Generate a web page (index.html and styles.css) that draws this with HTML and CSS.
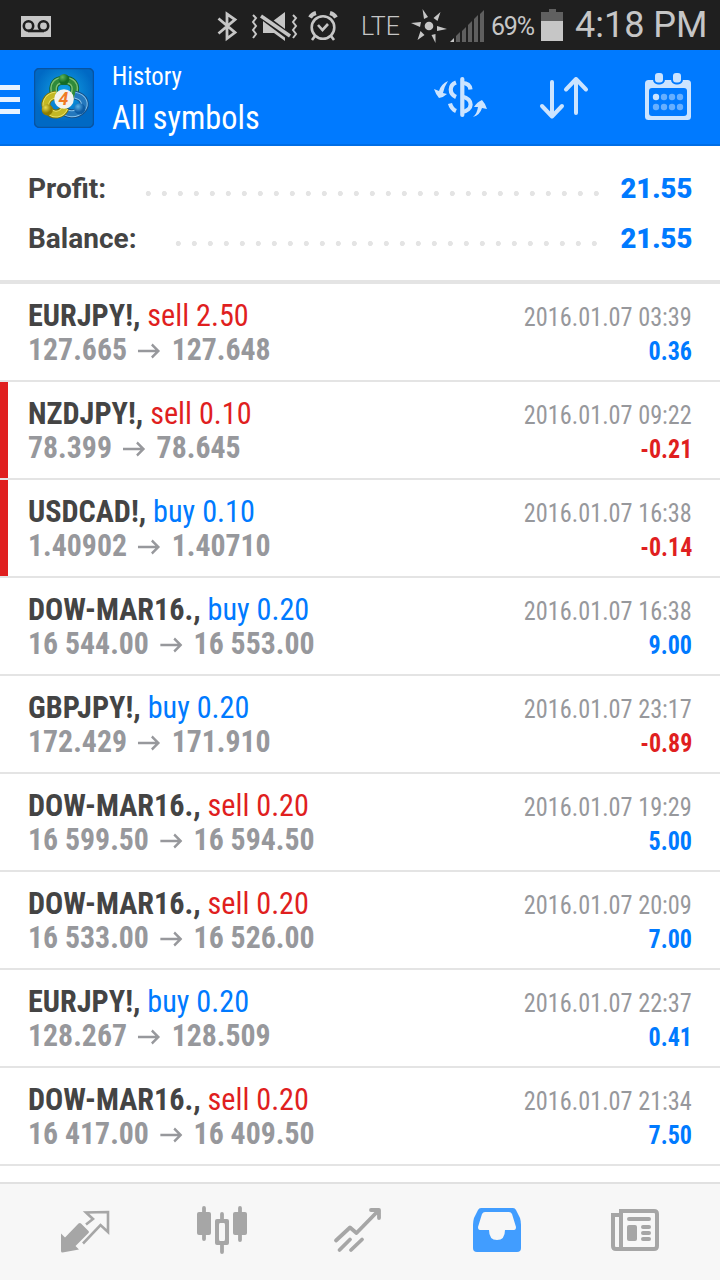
FILE: index.html
```html
<!DOCTYPE html>
<html lang="en">
<head>
<meta charset="utf-8">
<title>History</title>
<link rel="stylesheet" href="styles.css">
</head>
<body>
<div class="status">
  <svg class="s-mail" width="30" height="21" viewBox="0 0 30 21"><path fill="#c6c6c6" d="M0 0h30v21H0z"/><g fill="none" stroke="#1f1f1f" stroke-width="2.600"><circle cx="7.500" cy="10" r="4.700"/><circle cx="22.500" cy="10" r="4.700"/><path d="M7 15h16"/></g></svg>
  <svg class="s-bt" width="21" height="32" viewBox="0 0 21 32"><path fill="none" stroke="#c6c6c6" stroke-width="2.800" d="M1.500 8.500 18 22.500 10 28.500V4L18 9.500 1.500 23.500"/></svg>
  <svg class="s-mute" width="48" height="32" viewBox="0 0 48 32"><path fill="#c6c6c6" d="M12 11v12h11l11 8V2L22 11z"/><path stroke="#1f1f1f" stroke-width="7" d="M11 6l28 21"/><path stroke="#c6c6c6" stroke-width="3.500" d="M10 6l29 20"/><path fill="none" stroke="#c6c6c6" stroke-width="2" d="M2 5l3 3-3 4 3 4-3 4 3 4-3 4M42 5l3 3-3 4 3 4-3 4 3 4-3 4"/></svg>
  <svg class="s-alarm" width="30" height="30" viewBox="0 0 30 30"><g fill="none" stroke="#c6c6c6"><circle cx="15" cy="16.500" r="11.300" stroke-width="2.600"/><path stroke-width="2.600" d="M10 14l4.500 5L20 13M7 25l-3 4M23 25l3 4"/><path stroke-width="4" d="M2 6.500Q4 3 8 2M28 6.500Q26 3 22 2"/></g></svg>
  <span class="s-lte">LTE</span>
  <svg class="s-wind" width="36" height="34" viewBox="0 0 36 34"><g fill="#c6c6c6"><circle cx="18" cy="17" r="4.300"/><path d="M11.500 0l5.500 8-4 2zM29.500 3l-3 9-4-3zM36 20l-10 2v-5zM24.500 34l-4-8 4-1zM6.500 31l3-9 4 4zM0 14l10-1-1 5z"/></g></svg>
  <svg class="s-signal" width="34" height="32" viewBox="0 0 34 32"><path fill="#c6c6c6" d="M0 32l4-4v4z"/><path fill="#5f5f5f" d="M6 32v-6l4-4v10zM12 32V21l4-4v15zM18 32V15l4-4v21zM24 32V9l4-4v27zM30 32V4l4-4v32z"/></svg>
  <span class="s-pct">69%</span>
  <svg class="s-bat" width="22" height="32" viewBox="0 0 22 32"><path fill="#606060" d="M0 3h8V0h7v3h7v9H0z"/><path fill="#c6c6c6" d="M0 12h22v20H0z"/></svg>
  <span class="s-time">4:18 PM</span>
</div>
<header class="header">
  <div class="burger"><i></i><i></i><i></i></div>
  <svg class="logo" width="60" height="60" viewBox="0.500 0.500 61 61">
    <defs>
      <radialGradient id="bg" cy=".4"><stop offset="0" stop-color="#13a5e6"/><stop offset="1" stop-color="#0069c4"/></radialGradient>
      <radialGradient id="gn" cx=".35" cy=".3"><stop offset="0" stop-color="#5fb558"/><stop offset="1" stop-color="#146c25"/></radialGradient>
      <radialGradient id="yl" cx=".35" cy=".3"><stop offset="0" stop-color="#e8dc50"/><stop offset="1" stop-color="#8f7d00"/></radialGradient>
      <radialGradient id="bl" cx=".35" cy=".3"><stop offset="0" stop-color="#5cb0e6"/><stop offset="1" stop-color="#0d5ca5"/></radialGradient>
    </defs>
    <rect x="1" y="1" width="60" height="60" rx="5" fill="url(#bg)" stroke="#0753a2" stroke-width="1.500"/>
    <path fill="none" stroke="#12642a" stroke-width="9" d="M22 31C17 15 25 13 31 13S46 15 40 31"/>
    <path fill="none" stroke="#7cbf74" stroke-width="7" d="M22 30C17 15 25 13 31 13S46 15 40 30"/>
    <path fill="none" stroke="#2f8a3a" stroke-width="4" d="M22 30C17 15 25 13 31 13S46 15 40 30"/>
    <path fill="none" stroke="#174f87" stroke-width="9" d="M42 28C52 30 54 38 49 43 43 49 33 48 29 42"/>
    <path fill="none" stroke="#86c4ee" stroke-width="7" d="M42 28C52 30 54 38 49 43 43 49 33 48 29 42"/>
    <path fill="none" stroke="#2478bd" stroke-width="5" d="M42 28C52 30 54 38 49 43 43 49 33 48 29 42"/>
    <path fill="none" stroke="#7c7200" stroke-width="9" d="M23 28C13 29 10 38 15 43 20 50 29 48 32 41"/>
    <path fill="none" stroke="#e9e36c" stroke-width="7" d="M23 28C13 29 10 38 15 43 20 50 29 48 32 41"/>
    <path fill="none" stroke="#c3b824" stroke-width="5" d="M23 28C13 29 10 38 15 43 20 50 29 48 32 41"/>
    <circle cx="31" cy="12" r="5.500" fill="url(#gn)"/><circle cx="14" cy="43" r="5.700" fill="url(#yl)"/><circle cx="47" cy="42" r="5.700" fill="url(#bl)"/>
    <circle cx="31" cy="32" r="10" fill="#f3f2ef"/>
    <text class="logo-num" x="30.500" y="38" text-anchor="middle">4</text>
  </svg>
  <div class="titles"><div class="t1">History</div><div class="t2">All symbols</div></div>
  <svg class="h-dollar" width="53" height="42" viewBox="0 0 53 42"><g fill="none" stroke="#cce4ff" stroke-width="4.200"><path d="M28.300 3v36" stroke-linecap="round"/><path d="M36.500 13.500C36 9 33 7 28 7M22 6.500C15 9 15 18 22 21M28 20.500C40 23 39 34.500 28 36M16 27.500Q17.500 33 22 35" stroke-linecap="butt"/></g><path fill="#cce4ff" d="M14 5Q7 8 5 15L0 13Q2 19 5 22 10 21 13 18L9 17Q10 11 14 5zM39 41Q43 38 44 31L40 31Q43 26 48 24 51 27 53 33L48 32Q46 39 39 41z"/></svg>
  <svg class="h-sort" width="50" height="44" viewBox="0 0 50 44"><path fill="none" stroke="#cce4ff" stroke-width="4" stroke-linecap="round" stroke-linejoin="round" d="M13 6v34M3 30l10 10.500L23 30M37 37V3M27 13.500L37 3l10 10.500"/></svg>
  <svg class="h-cal" width="46" height="48" viewBox="0 0 46 48"><rect y="7" width="46" height="40" rx="3.500" fill="#cce4ff"/><rect x="4" y="15" width="38" height="28" rx="3" fill="#007aff"/><g fill="#cce4ff" stroke="#007aff" stroke-width="2"><rect x="9" y="-1" width="10" height="11.500" rx="4"/><rect x="27" y="-1" width="10" height="11.500" rx="4"/></g><circle cx="11" cy="24" r="3.200" fill="#cce4ff"/><g fill="#66afff"><circle cx="19" cy="24" r="3.200"/><circle cx="27" cy="24" r="3.200"/><circle cx="35" cy="24" r="3.200"/><circle cx="11" cy="34" r="3.200"/><circle cx="19" cy="34" r="3.200"/><circle cx="27" cy="34" r="3.200"/><circle cx="35" cy="34" r="3.200"/></g></svg>
</header>
<section class="summary">
  <div class="sum"><span class="label">Profit:</span><i class="dots dots-profit"></i><b>21.55</b></div>
  <div class="sum"><span class="label">Balance:</span><i class="dots dots-balance"></i><b>21.55</b></div>
</section>
<main class="list">
  <article class="row"><div class="line"><div class="deal"><b>EURJPY!,</b> <span class="red">sell 2.50</span></div><time>2016.01.07 03:39</time></div><div class="line"><div class="price">127.665<svg class="arrow" viewBox="0 0 24 16"><path d="M0 8h22M15 1.500L22 8l-7 6.500"/></svg>127.648</div><div class="pl blue">0.36</div></div></article>
  <article class="row loss"><div class="line"><div class="deal"><b>NZDJPY!,</b> <span class="red">sell 0.10</span></div><time>2016.01.07 09:22</time></div><div class="line"><div class="price">78.399<svg class="arrow" viewBox="0 0 24 16"><path d="M0 8h22M15 1.500L22 8l-7 6.500"/></svg>78.645</div><div class="pl red">-0.21</div></div></article>
  <article class="row loss"><div class="line"><div class="deal"><b>USDCAD!,</b> <span class="blue">buy 0.10</span></div><time>2016.01.07 16:38</time></div><div class="line"><div class="price">1.40902<svg class="arrow" viewBox="0 0 24 16"><path d="M0 8h22M15 1.500L22 8l-7 6.500"/></svg>1.40710</div><div class="pl red">-0.14</div></div></article>
  <article class="row"><div class="line"><div class="deal"><b>DOW-MAR16.,</b> <span class="blue">buy 0.20</span></div><time>2016.01.07 16:38</time></div><div class="line"><div class="price">16 544.00<svg class="arrow" viewBox="0 0 24 16"><path d="M0 8h22M15 1.500L22 8l-7 6.500"/></svg>16 553.00</div><div class="pl blue">9.00</div></div></article>
  <article class="row"><div class="line"><div class="deal"><b>GBPJPY!,</b> <span class="blue">buy 0.20</span></div><time>2016.01.07 23:17</time></div><div class="line"><div class="price">172.429<svg class="arrow" viewBox="0 0 24 16"><path d="M0 8h22M15 1.500L22 8l-7 6.500"/></svg>171.910</div><div class="pl red">-0.89</div></div></article>
  <article class="row"><div class="line"><div class="deal"><b>DOW-MAR16.,</b> <span class="red">sell 0.20</span></div><time>2016.01.07 19:29</time></div><div class="line"><div class="price">16 599.50<svg class="arrow" viewBox="0 0 24 16"><path d="M0 8h22M15 1.500L22 8l-7 6.500"/></svg>16 594.50</div><div class="pl blue">5.00</div></div></article>
  <article class="row"><div class="line"><div class="deal"><b>DOW-MAR16.,</b> <span class="red">sell 0.20</span></div><time>2016.01.07 20:09</time></div><div class="line"><div class="price">16 533.00<svg class="arrow" viewBox="0 0 24 16"><path d="M0 8h22M15 1.500L22 8l-7 6.500"/></svg>16 526.00</div><div class="pl blue">7.00</div></div></article>
  <article class="row"><div class="line"><div class="deal"><b>EURJPY!,</b> <span class="blue">buy 0.20</span></div><time>2016.01.07 22:37</time></div><div class="line"><div class="price">128.267<svg class="arrow" viewBox="0 0 24 16"><path d="M0 8h22M15 1.500L22 8l-7 6.500"/></svg>128.509</div><div class="pl blue">0.41</div></div></article>
  <article class="row"><div class="line"><div class="deal"><b>DOW-MAR16.,</b> <span class="red">sell 0.20</span></div><time>2016.01.07 21:34</time></div><div class="line"><div class="price">16 417.00<svg class="arrow" viewBox="0 0 24 16"><path d="M0 8h22M15 1.500L22 8l-7 6.500"/></svg>16 409.50</div><div class="pl blue">7.50</div></div></article>
</main>
<nav class="tabs">
  <div><svg width="50" height="50" viewBox="0 0 50 50"><path fill="#a6a6a6" d="M1 28.500l4 4L18.500 18.500q1.500-1 2.500 0L28.500 26q1 1 0 2L15.500 41l3.500 3.500L2.500 47.500q-1.500 0-1.500-1.500z"/><path fill="none" stroke="#a6a6a6" stroke-width="2.600" d="M26 19.500l7-5.500-7-6.500L48 7v20l-7.500-7L23 38.500"/></svg></div>
  <div><svg width="50" height="50" viewBox="0 0 50 50"><g fill="none" stroke="#a6a6a6" stroke-width="3.800" stroke-linecap="round"><path d="M7 3v31M43 3v32M25 9v7M25 40v7"/></g><g fill="#a6a6a6"><rect y="7" width="14" height="23" rx="2"/><rect x="36" y="7" width="14" height="23" rx="2"/><path fill-rule="evenodd" d="M20 14h10q2 0 2 2v22q0 2-2 2H20q-2 0-2-2V16q0-2 2-2zm2 6v14q0 2 1 2h4q1 0 1-2V20q0-2-1-2h-4q-1 0-1 2z"/></g></svg></div>
  <div class="nudge"><svg width="50" height="50" viewBox="0 0 50 50"><path fill="none" stroke="#a6a6a6" stroke-width="3.800" stroke-linecap="round" stroke-linejoin="round" d="M2 35.500L16 22.500l6.500 5.500L44 6M37 5h8v8M5.500 45L16 34.500M17 45l11-10.500"/></svg></div>
  <div class="nudge"><svg width="50" height="50" viewBox="0 0 50 50"><path fill="#419dff" d="M9 3h32q2 0 3 2l4 8q1 3 1 7v23q0 4-4 4H5q-4 0-4-4V20q0-4 1-7l4-8q1-2 3-2z"/><path fill="#f7f7f7" d="M13 7h24q2 0 3 2l4 13q0 3-2 3h-9q0 10-8 10t-8-10H8q-2 0-2-3L10 9q1-2 3-2z"/></svg></div>
  <div><svg width="50" height="50" viewBox="0 0 50 50"><g fill="none" stroke="#a6a6a6" stroke-width="4"><path d="M11 6v38h33q3 0 3-3V9q0-3-3-3zM11 10H3v31q0 3 3 3h8"/></g><g stroke="#a6a6a6" stroke-width="4" stroke-linecap="round"><path d="M19 14h20M33 22h6M33 28h6M33 34h6"/></g><rect x="17" y="20" width="10" height="16" rx="2" fill="#a6a6a6"/></svg></div>
</nav>
</body>
</html>
```
FILE: styles.css
```css
* { box-sizing: border-box; }
body {
  margin: 0;
  width: 720px;
  height: 1280px;
  display: flex;
  flex-direction: column;
  overflow: hidden;
  background: #fff;
  color: #444;
  font-family: "Roboto Condensed", Roboto, sans-serif;
  font-stretch: 75%;
}
svg { display: block; flex: none; }
.red { color: #e01f1f; }
.blue { color: #007aff; }

.status {
  height: 50px;
  background: #1f1f1f;
  color: #c6c6c6;
  display: flex;
  align-items: flex-start;
  font-family: Roboto, sans-serif;
  font-stretch: normal;
  white-space: nowrap;
}
.s-mail { margin: 16px 0 0 21px; }
.s-bt { margin: 10px 0 0 166px; }
.s-mute { margin: 10px 0 0 13px; }
.s-alarm { margin: 11px 0 0 9px; }
.s-lte { margin-left: 23px; width: 50px; font: 300 25px/54px Roboto, sans-serif; }
.s-wind { margin: 9px 0 0; }
.s-signal { margin: 10px 0 0 3px; }
.s-pct { margin-left: 7px; width: 50px; font: 25px/53px Roboto, sans-serif; letter-spacing: -1.200px; }
.s-bat { margin: 9px 0 0; }
.s-time { margin-left: 12px; font: 36px/51px Roboto, sans-serif; }

.header {
  height: 96px;
  background: #007aff;
  border-bottom: 2px solid #006ee6;
  color: #fff;
  display: flex;
  align-items: flex-start;
}
.burger { width: 20px; margin-top: 35px; display: grid; gap: 7px; }
.burger i { height: 5px; background: #e8f3ff; }
.logo { margin: 18px 0 0 14px; }
.logo-num { font: italic bold 18px Roboto, sans-serif; fill: #f07a24; }
.titles { width: 340px; padding: 9px 0 0 18px; white-space: nowrap; }
.t1, .t2 { transform: scaleX(.95); transform-origin: 0 0; }
.t1 { font-size: 26px; line-height: 34px; }
.t2 { font-size: 34px; line-height: 48px; }
.h-dollar { margin-top: 26px; }
.h-sort { margin: 26px 0 0 52px; }
.h-cal { margin: 23px 0 0 56px; }

.summary {
  height: 138px;
  padding: 18px 28px 0;
  border-bottom: 4px solid #e4e4e4;
  font: bold 28px/50px Roboto, sans-serif;
}
.sum { height: 50px; display: flex; }
.sum b { margin-left: auto; color: #007aff; transform: scaleX(.98); transform-origin: 100% 0; }
.label { width: 112px; }
.sum:last-child .label { width: 142px; }
.dots {
  height: 16px;
  margin-top: 21px;
  background: radial-gradient(circle at 8.300px 8.500px, #e4e4e4 2.200px, transparent 2.900px) 0 0 / 16px 16px;
}
.dots-profit { width: 464px; }
.dots-balance { width: 432px; }

.list { flex: 1; }
.row {
  height: 98px;
  padding: 14px 28px 0;
  border-bottom: 2px solid #e4e4e4;
  white-space: nowrap;
}
.loss { background: linear-gradient(#e01f1f, #e01f1f) 0 0 / 8px 96px no-repeat; }
.line { height: 34px; display: flex; justify-content: space-between; align-items: baseline; line-height: 34px; }
.deal { font-size: 32px; transform: scaleX(.944); transform-origin: 0 0; }
.price { font-size: 32px; font-weight: bold; color: #97989c; transform: scaleX(.931); transform-origin: 0 0; }
.arrow { display: inline-block; width: 24px; height: 16px; margin: 0 12px; vertical-align: 1px; }
.arrow path { fill: none; stroke: #97989c; stroke-width: 2.500; }
time { font-size: 26px; color: #97989c; transform: scaleX(.934); transform-origin: 100% 0; }
.pl { font-size: 26px; font-weight: bold; transform: scaleX(.925); transform-origin: 100% 0; }

.tabs {
  height: 98px;
  padding: 0 16px;
  border-top: 2px solid #e1e1e1;
  background: #f7f7f7;
  display: grid;
  grid-template-columns: repeat(5, 1fr);
  justify-items: center;
}
.tabs div { padding-top: 21px; }
.tabs .nudge { padding-right: 2px; }
.tabs svg { overflow: visible; }
```
